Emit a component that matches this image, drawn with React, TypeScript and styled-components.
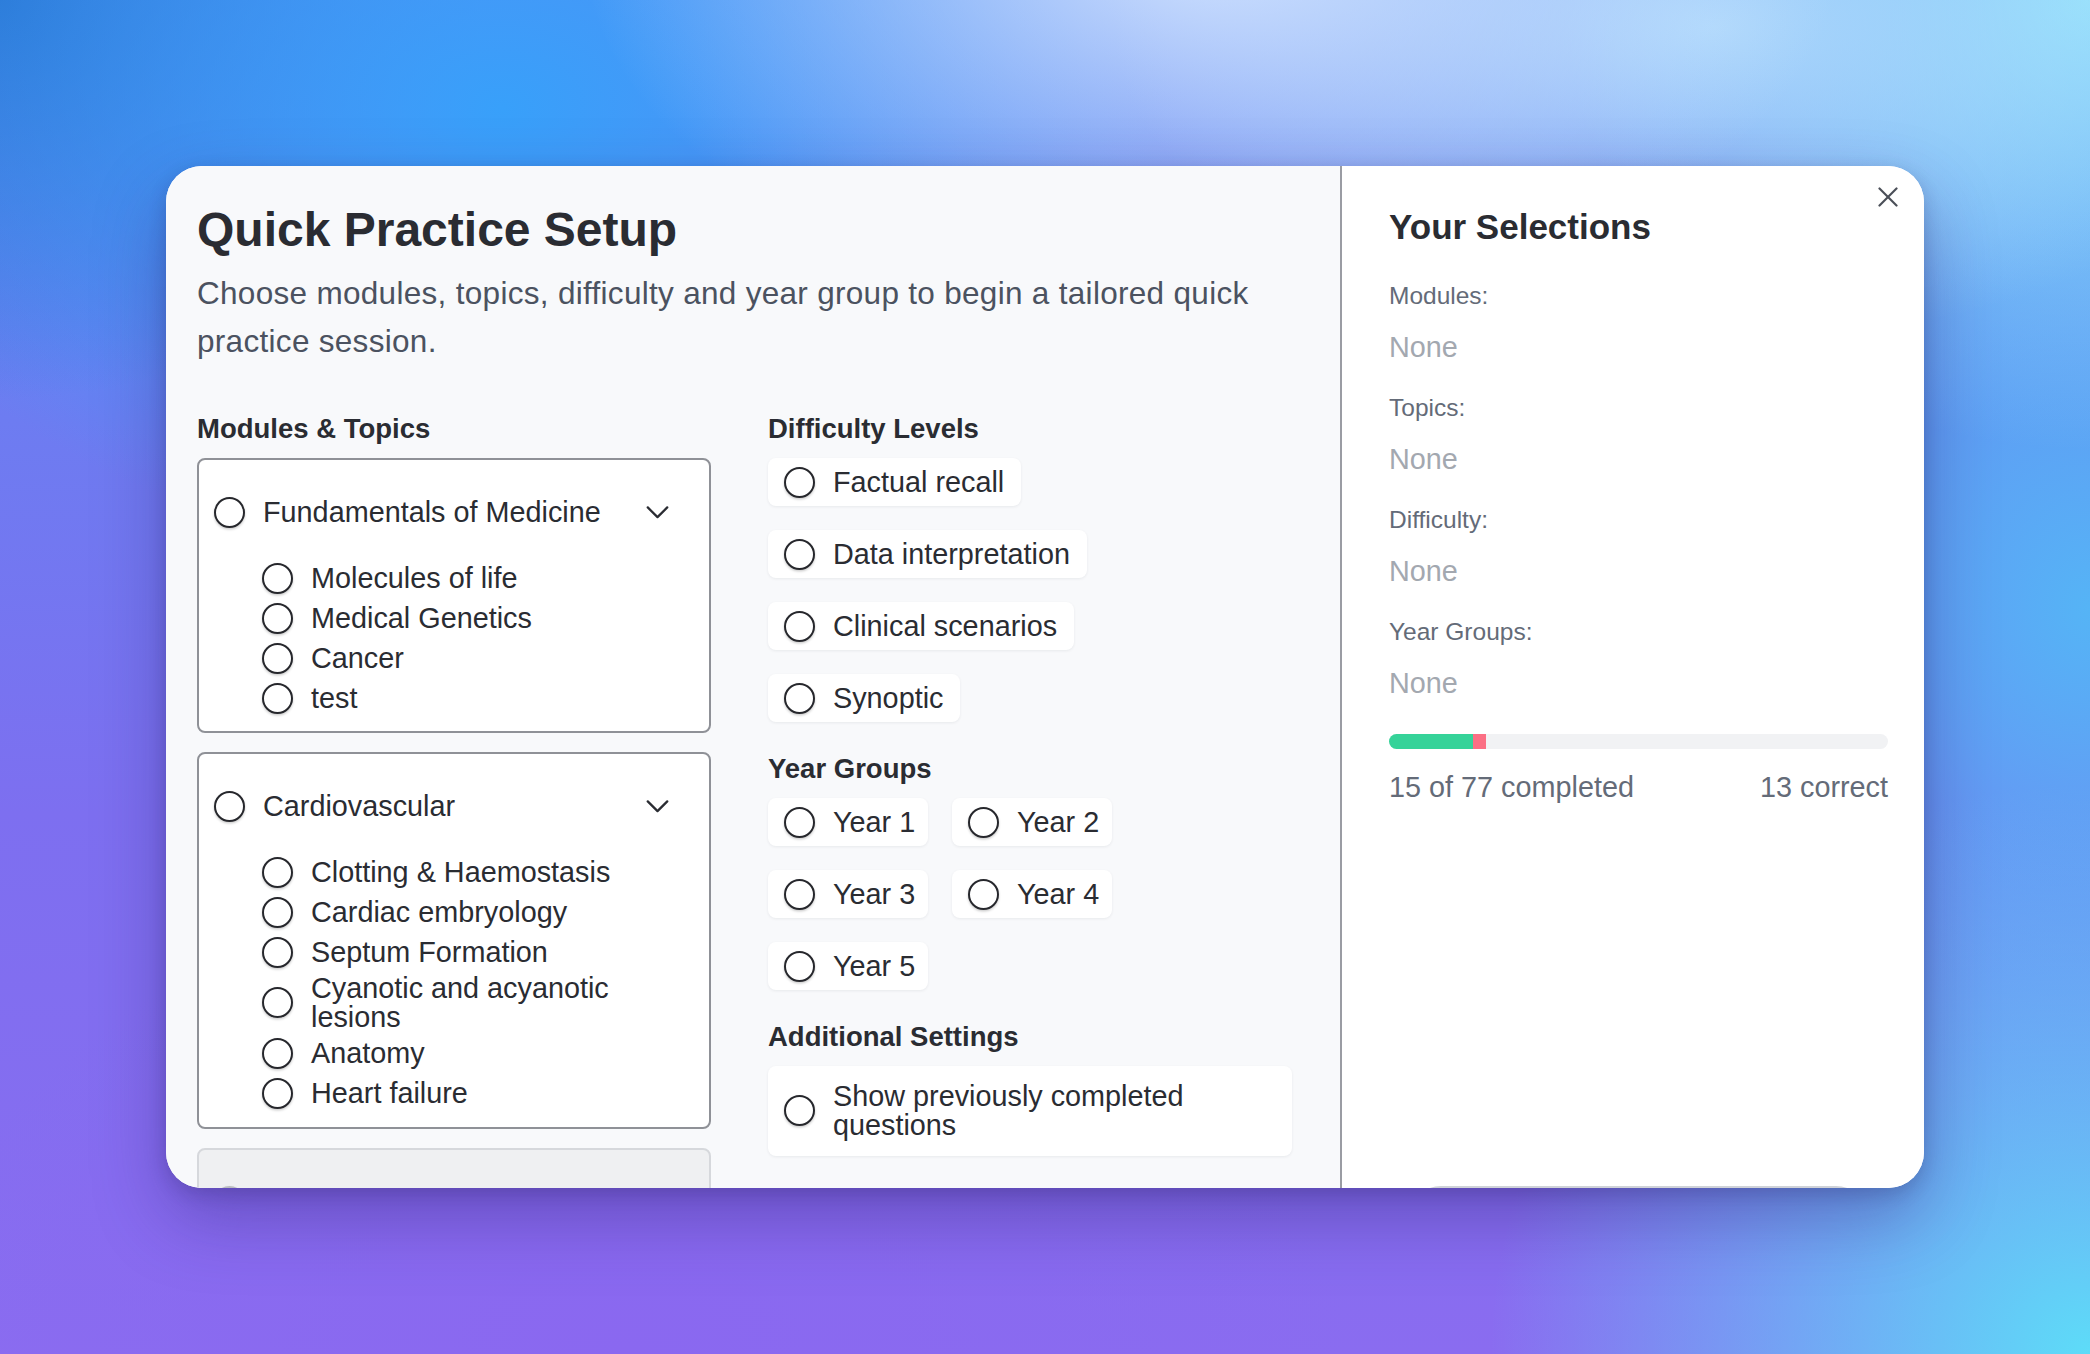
import React from "react";
import styled, { createGlobalStyle } from "styled-components";

const GlobalStyle = createGlobalStyle`
  html, body {
    margin: 0;
    padding: 0;
  }
  body {
    font-family: "Liberation Sans", Arial, Helvetica, sans-serif;
    color: #2a2c32;
  }
  * {
    box-sizing: border-box;
  }
`;

const modules = [
  {
    name: "Fundamentals of Medicine",
    topics: ["Molecules of life", "Medical Genetics", "Cancer", "test"],
  },
  {
    name: "Cardiovascular",
    topics: [
      "Clotting & Haemostasis",
      "Cardiac embryology",
      "Septum Formation",
      "Cyanotic and acyanotic lesions",
      "Anatomy",
      "Heart failure",
    ],
  },
];

const difficulties = [
  "Factual recall",
  "Data interpretation",
  "Clinical scenarios",
  "Synoptic",
];

const years = ["Year 1", "Year 2", "Year 3", "Year 4", "Year 5"];

const summary = ["Modules:", "Topics:", "Difficulty:", "Year Groups:"];

const total = 77;
const completed = 15;
const correct = 13;

function App() {
  const correctPct = (correct / total) * 100;
  const wrongPct = ((completed - correct) / total) * 100;

  return (
    <>
      <GlobalStyle />
      <Backdrop>
        <Modal>
          <LeftPanel>
            <Title>Quick Practice Setup</Title>
            <Subtitle>
              Choose modules, topics, difficulty and year group to begin a
              tailored quick practice session.
            </Subtitle>
            <Columns>
              <div>
                <SectionHeading>Modules &amp; Topics</SectionHeading>
                {modules.map((m) => (
                  <ModuleCard key={m.name}>
                    <CardHeader>
                      <Radio />
                      <HeaderLabel>{m.name}</HeaderLabel>
                      <Chevron viewBox="0 0 24 14">
                        <polyline points="1.5,1.5 12,12 22.5,1.5" />
                      </Chevron>
                    </CardHeader>
                    <TopicList>
                      {m.topics.map((t) => (
                        <TopicRow key={t}>
                          <Radio />
                          <span>{t}</span>
                        </TopicRow>
                      ))}
                    </TopicList>
                  </ModuleCard>
                ))}
                {/* next module card, scrolled out of view */}
                <ModuleCard $muted>
                  <CardHeader>
                    <Radio $muted />
                  </CardHeader>
                </ModuleCard>
              </div>

              <div>
                <SectionHeading>Difficulty Levels</SectionHeading>
                <ChipStack>
                  {difficulties.map((d) => (
                    <Chip key={d}>
                      <Radio />
                      <span>{d}</span>
                    </Chip>
                  ))}
                </ChipStack>

                <SectionHeading $spaced>Year Groups</SectionHeading>
                <YearGrid>
                  {years.map((y) => (
                    <Chip key={y}>
                      <Radio />
                      <span>{y}</span>
                    </Chip>
                  ))}
                </YearGrid>

                <SectionHeading $spaced>Additional Settings</SectionHeading>
                <Chip $tall>
                  <Radio />
                  <span>Show previously completed questions</span>
                </Chip>
              </div>
            </Columns>
          </LeftPanel>

          <RightPanel>
            <RightTitle>Your Selections</RightTitle>
            {summary.map((s) => (
              <SummaryGroup key={s}>
                <SummaryLabel>{s}</SummaryLabel>
                <SummaryValue>None</SummaryValue>
              </SummaryGroup>
            ))}
            <ProgressTrack>
              <Segment $color="#35d399" style={{ width: `${correctPct}%` }} />
              <Segment $color="#fb6f84" style={{ width: `${wrongPct}%` }} />
            </ProgressTrack>
            <Stats>
              <span>
                {completed} of {total} completed
              </span>
              <span>{correct} correct</span>
            </Stats>
            <StartButton aria-label="Start practice" />
          </RightPanel>

          <CloseButton aria-label="Close">
            <svg width="20" height="20" viewBox="0 0 20 20">
              <line x1="1.5" y1="1.5" x2="18.5" y2="18.5" />
              <line x1="18.5" y1="1.5" x2="1.5" y2="18.5" />
            </svg>
          </CloseButton>
        </Modal>
      </Backdrop>
    </>
  );
}

const Backdrop = styled.div`
  width: 2090px;
  height: 1354px;
  display: flex;
  align-items: center;
  justify-content: center;
  overflow: hidden;
  background-color: #7d72f0;
  background-image: radial-gradient(
      ellipse 900px 520px at 58% -4%,
      rgba(214, 230, 255, 0.95),
      rgba(214, 230, 255, 0) 70%
    ),
    radial-gradient(
      ellipse 800px 420px at 82% 2%,
      rgba(176, 218, 252, 0.95),
      rgba(176, 218, 252, 0) 75%
    ),
    radial-gradient(
      ellipse 700px 600px at 100% 0%,
      #8fe4fb,
      rgba(143, 228, 251, 0) 75%
    ),
    radial-gradient(
      ellipse 800px 760px at 100% 100%,
      #5ddcf8,
      rgba(93, 220, 248, 0) 75%
    ),
    radial-gradient(
      ellipse 650px 800px at 100% 45%,
      #55b4f6,
      rgba(85, 180, 246, 0) 80%
    ),
    radial-gradient(
      ellipse 900px 600px at 24% 8%,
      #38a0fa,
      rgba(56, 160, 250, 0) 75%
    ),
    radial-gradient(
      ellipse 600px 500px at 0% 0%,
      #2a74d2,
      rgba(42, 116, 210, 0) 80%
    ),
    radial-gradient(
      ellipse 900px 600px at 30% 100%,
      #8a68f0,
      rgba(138, 104, 240, 0) 80%
    ),
    linear-gradient(180deg, #5c8af2 0%, #7d6ff0 60%, #8a6cf0 100%);
`;

const Modal = styled.div`
  position: relative;
  width: 1758px;
  height: 1022px;
  display: grid;
  grid-template-columns: 1174px 1fr;
  border-radius: 36px;
  overflow: hidden;
  background: #ffffff;
  box-shadow: 0 30px 70px rgba(40, 30, 110, 0.35),
    0 6px 18px rgba(20, 20, 60, 0.18);
`;

const LeftPanel = styled.div`
  background: #f8f9fb;
  padding: 35px 48px 0 31px;
  overflow: hidden;
`;

const Title = styled.h1`
  margin: 0;
  font-size: 48px;
  line-height: 58px;
  font-weight: 700;
  color: #2a2c32;
`;

const Subtitle = styled.p`
  margin: 10px 0 0;
  font-size: 31.5px;
  letter-spacing: 0.3px;
  line-height: 48px;
  color: #4b5260;
`;

const Columns = styled.div`
  display: grid;
  grid-template-columns: 514px 524px;
  column-gap: 57px;
  align-items: start;
  margin-top: 43px;
`;

const SectionHeading = styled.h3<{ $spaced?: boolean }>`
  margin: ${(p) => (p.$spaced ? "26px" : "0")} 0 9px;
  font-size: 27.5px;
  line-height: 41px;
  font-weight: 700;
  color: #2a2c32;
`;

const ModuleCard = styled.div<{ $muted?: boolean }>`
  border: 2px solid ${(p) => (p.$muted ? "#d6d8dc" : "#8f9197")};
  border-radius: 8px;
  background: ${(p) => (p.$muted ? "#eff0f2" : "#ffffff")};
  padding: 16px 15px 15px;
  margin-bottom: 19px;
`;

const CardHeader = styled.div`
  display: flex;
  align-items: center;
  height: 72px;
`;

const Radio = styled.span<{ $muted?: boolean }>`
  flex: none;
  width: 31px;
  height: 31px;
  border-radius: 50%;
  background: #ffffff;
  border: 2px solid ${(p) => (p.$muted ? "#b9bbc0" : "#26272c")};
  box-shadow: 0 1.5px 2.5px rgba(0, 0, 0, 0.2);
`;

const HeaderLabel = styled.span`
  flex: 1;
  margin-left: 18px;
  font-size: 28.8px;
  line-height: 1;
  color: #2a2c32;
`;

const Chevron = styled.svg`
  flex: none;
  width: 23px;
  height: 13px;
  margin-right: 25px;
  fill: none;
  stroke: #2a2c32;
  stroke-width: 2.4;
  stroke-linecap: round;
  stroke-linejoin: round;
`;

const TopicList = styled.div`
  display: flex;
  flex-direction: column;
  gap: 4px;
  margin-top: 12px;
  padding-left: 48px;
`;

const TopicRow = styled.div`
  display: flex;
  align-items: center;
  gap: 18px;
  min-height: 36px;
  font-size: 28.8px;
  line-height: 1;
  color: #2a2c32;
`;

const ChipStack = styled.div`
  display: flex;
  flex-direction: column;
  align-items: flex-start;
  gap: 24px;
`;

const YearGrid = styled.div`
  display: grid;
  grid-template-columns: repeat(2, 160px);
  gap: 24px;
`;

const Chip = styled.div<{ $tall?: boolean }>`
  display: flex;
  align-items: center;
  gap: 18px;
  height: ${(p) => (p.$tall ? "auto" : "48px")};
  width: ${(p) => (p.$tall ? "100%" : "auto")};
  padding: ${(p) => (p.$tall ? "16px 17px 16px 16px" : "0 17px 0 16px")};
  background: #ffffff;
  border-radius: 8px;
  box-shadow: 0 1px 3px rgba(17, 24, 39, 0.07);
  font-size: 28.8px;
  line-height: 1;
  color: #2a2c32;
  white-space: ${(p) => (p.$tall ? "normal" : "nowrap")};
`;

const RightPanel = styled.div`
  border-left: 2px solid #9a9ca3;
  background: #ffffff;
  padding: 40px 36px 0 47px;
  overflow: hidden;
`;

const RightTitle = styled.h2`
  margin: 0 0 33px;
  font-size: 35px;
  line-height: 42px;
  font-weight: 700;
  color: #2a2c32;
`;

const SummaryGroup = styled.div`
  margin-bottom: 28px;
  &:nth-of-type(4) {
    margin-bottom: 0;
  }
`;

const SummaryLabel = styled.div`
  font-size: 24.5px;
  line-height: 30px;
  color: #646b78;
`;

const SummaryValue = styled.div`
  margin-top: 18px;
  font-size: 28.8px;
  line-height: 36px;
  color: #a3a8b0;
`;

const ProgressTrack = styled.div`
  display: flex;
  height: 15px;
  margin-top: 33px;
  border-radius: 999px;
  background: #f1f2f4;
  overflow: hidden;
`;

const Segment = styled.div<{ $color: string }>`
  flex: none;
  height: 100%;
  background: ${(p) => p.$color};
`;

const Stats = styled.div`
  display: flex;
  justify-content: space-between;
  margin-top: 20px;
  font-size: 28.8px;
  line-height: 36px;
  color: #646b78;
`;

const StartButton = styled.button`
  display: block;
  width: calc(100% - 40px);
  margin: 381px 20px 0;
  height: 64px;
  border: none;
  border-radius: 999px;
  background: #cfd2d8;
`;

const CloseButton = styled.button`
  position: absolute;
  top: 21px;
  right: 26px;
  width: 20px;
  height: 20px;
  padding: 0;
  border: none;
  background: transparent;
  display: flex;
  svg {
    stroke: #4a4e57;
    stroke-width: 2.2;
    stroke-linecap: round;
  }
`;

export default App;
